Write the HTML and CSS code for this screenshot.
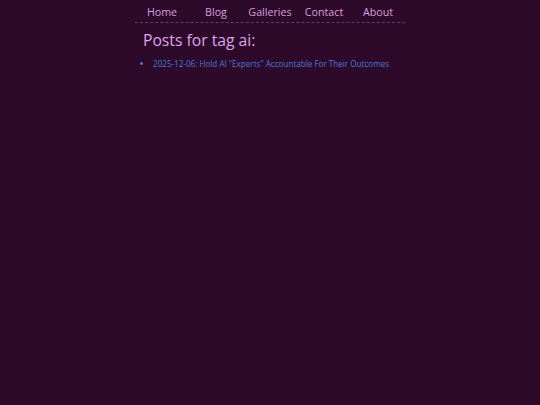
FILE: index.html
```html
<!DOCTYPE html>
<html>
<head>
<meta charset="utf-8">
<link rel="stylesheet" href="styles.css">
</head>
<body>
<div class="page">
  <nav class="nav">
    <a class="nav-item" href="#">Home</a>
    <a class="nav-item" href="#">Blog</a>
    <a class="nav-item" href="#">Galleries</a>
    <a class="nav-item" href="#">Contact</a>
    <a class="nav-item" href="#">About</a>
  </nav>
  <main class="content">
    <h1 class="title">Posts for tag ai:</h1>
    <ul class="posts">
      <li><a href="#">2025-12-06: Hold AI "Experts" Accountable For Their Outcomes</a></li>
    </ul>
  </main>
</div>
</body>
</html>
```
FILE: styles.css
```css
html, body {
  margin: 0;
  padding: 0;
  background: #2d0a2a;
  font-family: "Open Sans", "DejaVu Sans", sans-serif;
}
.page {
  width: 270px;
  margin: 0 auto;
}
.nav {
  display: grid;
  grid-template-columns: repeat(5, 1fr);
  padding-top: 5px;
  height: 17px;
  border-bottom: 1px dashed #5e3d5e;
}
.nav-item {
  text-align: center;
  color: #d59fdc;
  text-decoration: none;
  font-size: 10.7px;
  line-height: 14px;
}
.content {
  padding: 0 8px;
}
.title {
  margin: 8px 0 0;
  font-size: 15.7px;
  font-weight: 400;
  color: #dea4e6;
  line-height: 19px;
}
.posts {
  margin: 8px 0 0;
  padding-left: 10px;
  color: #4a7ad4;
  font-size: 8.1px;
  line-height: 12px;
}
.posts a {
  color: #4a7ad4;
  text-decoration: none;
}
```
